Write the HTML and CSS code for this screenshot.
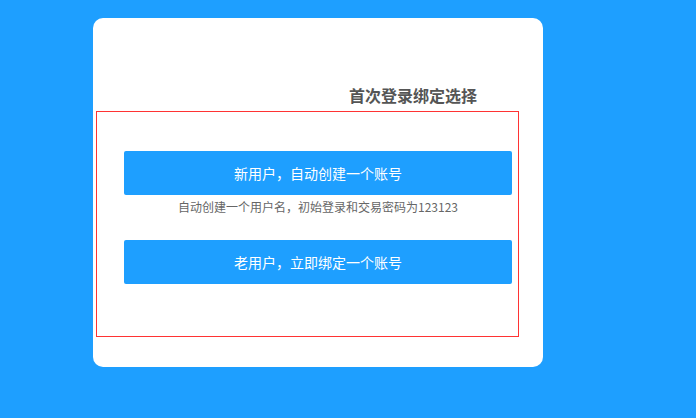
FILE: index.html
```html
<!DOCTYPE html>
<html lang="zh-CN">
<head>
  <meta charset="UTF-8">
  <meta name="viewport" content="width=device-width, initial-scale=1.0">
  <title>首次登录绑定选择</title>
  <link rel="stylesheet" href="styles.css">
</head>
<body>
  <div class="card">
    <h2 class="title">首次登录绑定选择</h2>
    <div class="choice-box">
      <div class="choice">
        <button type="button" class="btn">新用户，自动创建一个账号</button>
        <p class="hint">自动创建一个用户名，初始登录和交易密码为123123</p>
      </div>
      <div class="choice">
        <button type="button" class="btn">老用户，立即绑定一个账号</button>
      </div>
    </div>
  </div>
</body>
</html>
```

FILE: styles.css
```css
body {
  margin: 0;
  background-color: #1e9fff;
  font-family: "Noto Sans CJK SC", "Noto Sans", sans-serif;
  color: #666;
  height: 418px;
  overflow: hidden;
}
.card {
  box-sizing: border-box;
  width: 450px;
  height: 349px;
  margin: 18px 0 0 93px;
  padding-top: 65px;
  background-color: #fff;
  border-radius: 10px;
}
.title {
  margin: 0 0 4px;
  padding-left: 256px;
  font-size: 16px;
  line-height: 24px;
  font-weight: bold;
  color: #555;
}
.choice-box {
  box-sizing: border-box;
  width: 423px;
  height: 226px;
  margin-left: 3px;
  padding: 39px 6px 0 27px;
  border: 1px solid #ff3333;
}
.choice {
  width: 388px;
}
.btn {
  display: block;
  width: 100%;
  height: 44px;
  border: none;
  border-radius: 2px;
  background-color: #1e9fff;
  color: #fff;
  font-family: inherit;
  font-size: 14px;
  cursor: pointer;
}
.hint {
  margin: 0 0 21px;
  font-size: 12px;
  line-height: 24px;
  text-align: center;
  color: #666;
}
```
